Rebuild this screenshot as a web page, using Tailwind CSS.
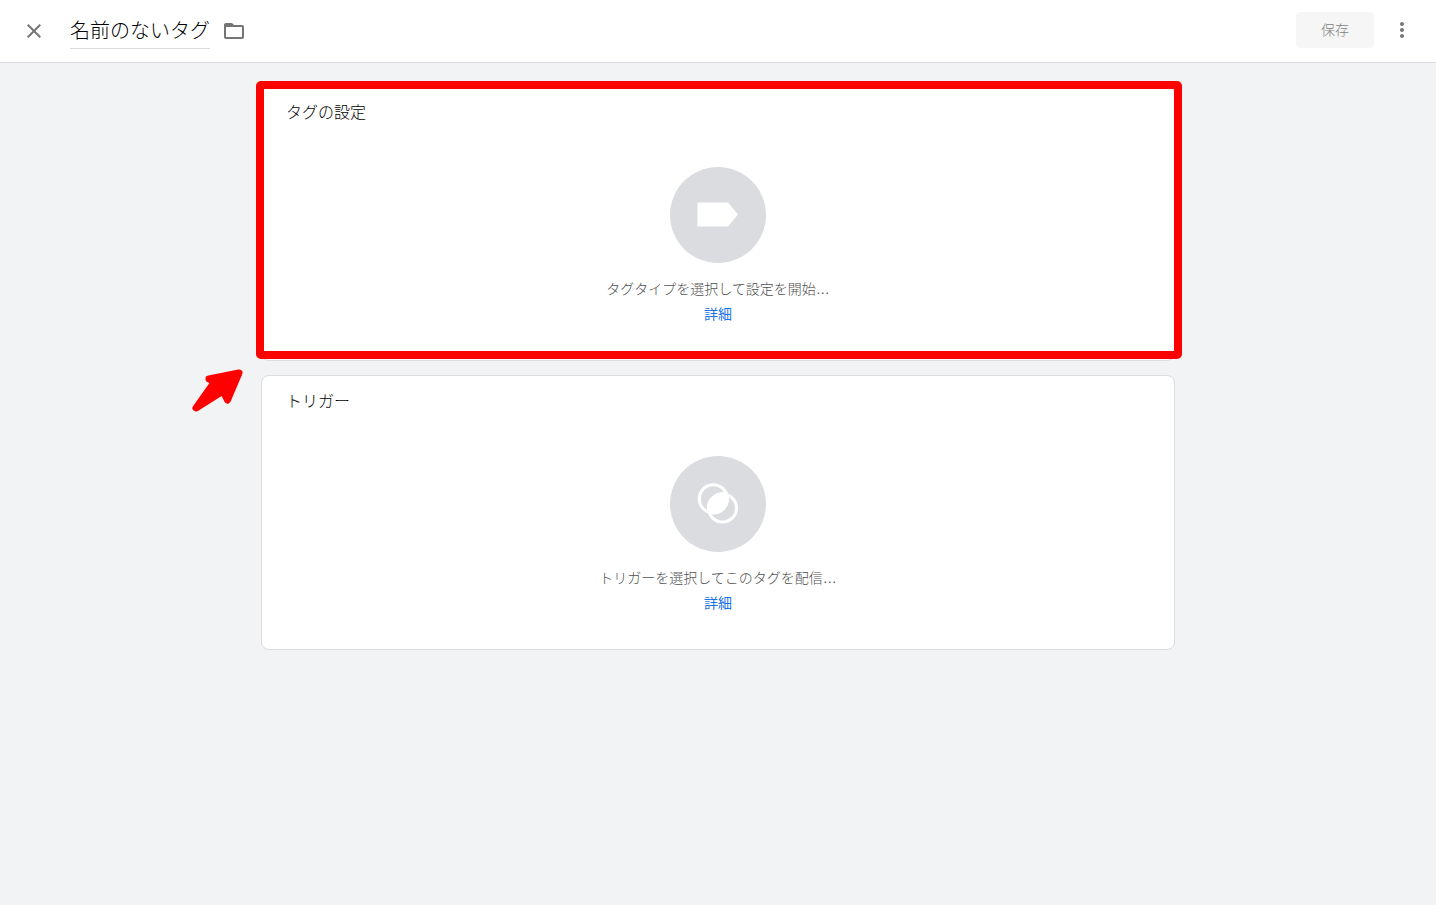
<!DOCTYPE html>
<html lang="ja">
    <head>
        <meta charset="UTF-8" />
        <meta name="viewport" content="width=device-width, initial-scale=1.0" />
        <title>名前のないタグ</title>
        <script src="https://cdn.jsdelivr.net/npm/@tailwindcss/browser@4"></script>
    </head>
    <body class="min-h-screen bg-[#f1f3f4] font-['Liberation_Sans','Noto_Sans_CJK_JP',sans-serif] font-light text-black">
        <header class="flex h-[63px] items-center justify-between border-b border-[#dadce0] bg-white px-[22px]">
            <div class="flex items-center">
                <button type="button" aria-label="閉じる" class="text-[#757575]">
                    <svg class="size-6" viewBox="0 0 24 24" fill="currentColor">
                        <path d="M19 6.41 17.59 5 12 10.59 6.41 5 5 6.41 10.59 12 5 17.59 6.41 19 12 13.41 17.59 19 19 17.59 13.41 12z" />
                    </svg>
                </button>
                <input
                    type="text"
                    name="tagName"
                    aria-label="タグ名"
                    value="名前のないタグ"
                    class="ml-6 h-9 w-[140px] border-b border-[#dadce0] pb-0.5 text-xl outline-none"
                />
                <button type="button" aria-label="フォルダ" class="ml-3 text-[#757575]">
                    <svg class="size-6" viewBox="0 0 24 24" fill="currentColor">
                        <path d="M20 6h-8l-2-2H4c-1.1 0-1.99.9-1.99 2L2 18c0 1.1.9 2 2 2h16c1.1 0 2-.9 2-2V8c0-1.1-.9-2-2-2zm0 12H4V8h16v10z" />
                    </svg>
                </button>
            </div>
            <div class="flex items-center gap-4 pb-0.5">
                <button type="button" disabled class="h-9 w-[78px] rounded bg-[#f6f6f6] text-sm text-[#808080]">保存</button>
                <button type="button" aria-label="その他" class="text-[#757575]">
                    <svg class="size-6" viewBox="0 0 24 24" fill="currentColor">
                        <path d="M12 8c1.1 0 2-.9 2-2s-.9-2-2-2-2 .9-2 2 .9 2 2 2zm0 2c-1.1 0-2 .9-2 2s.9 2 2 2 2-.9 2-2-.9-2-2-2zm0 6c-1.1 0-2 .9-2 2s.9 2 2 2 2-.9 2-2-.9-2-2-2z" />
                    </svg>
                </button>
            </div>
        </header>

        <main class="mx-auto flex max-w-[914px] flex-col gap-3.5 pt-[23px] pb-8">
            <!-- Tag configuration -->
            <section class="relative rounded-lg border border-[#dadce0] bg-white px-6 pt-3.5 pb-9">
                <h2 class="text-base">タグの設定</h2>
                <div class="mt-[42px] flex flex-col items-center text-sm">
                    <svg class="size-24" viewBox="0 0 96 96">
                        <circle cx="48" cy="48" r="48" fill="#dadce0" />
                        <path d="M27.5 35.5H58L68 47.5 58 59.5H27.5z" fill="#fff" />
                    </svg>
                    <p class="mt-4 text-[#505050]">タグタイプを選択して設定を開始…</p>
                    <a href="#" class="mt-[5px] font-normal text-[#1a73e8]">詳細</a>
                </div>

                <!-- Highlight frame and arrow -->
                <div class="pointer-events-none absolute -top-1.5 -right-2 bottom-px -left-1.5 rounded-[5px] border-8 border-[#ff0000]"></div>
                <svg class="absolute top-[281px] -left-[71px] h-[46px] w-[54px]" viewBox="0 0 54 46">
                    <path
                        d="M48 5 18 11 23.500 14 5 40 32 23 36.500 32z"
                        fill="#ff0000"
                        stroke="#ff0000"
                        stroke-width="7"
                        stroke-linejoin="round"
                    />
                </svg>
            </section>

            <!-- Triggers -->
            <section class="rounded-lg border border-[#dadce0] bg-white px-6 pt-3.5 pb-9">
                <h2 class="text-base">トリガー</h2>
                <div class="mt-[42px] flex flex-col items-center text-sm">
                    <svg class="size-24" viewBox="0 0 96 96">
                        <circle cx="48" cy="48" r="48" fill="#dadce0" />
                        <g fill="none" stroke="#fff" stroke-width="3">
                            <circle cx="43.300" cy="42.800" r="14" />
                            <circle cx="52.500" cy="52" r="14" />
                        </g>
                        <path d="M57.850 37.450A15.500 15.500 0 0 1 37.950 57.350 15.500 15.500 0 0 1 57.850 37.450z" fill="#fff" />
                    </svg>
                    <p class="mt-4 text-[#505050]">トリガーを選択してこのタグを配信…</p>
                    <a href="#" class="mt-[5px] font-normal text-[#1a73e8]">詳細</a>
                </div>
            </section>
        </main>
    </body>
</html>
